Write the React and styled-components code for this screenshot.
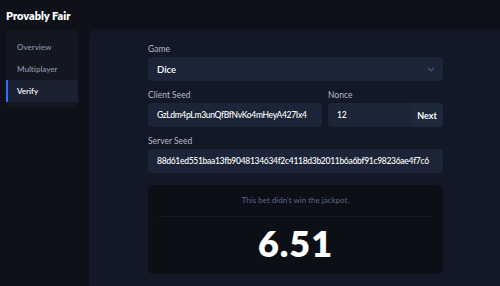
import React from 'react';
import styled, { createGlobalStyle } from 'styled-components';

const GlobalStyle = createGlobalStyle`
  html, body {
    margin: 0;
    padding: 0;
    background: #0e111a;
    font-family: Lato, "Open Sans", sans-serif;
    overflow: hidden;
  }
`;

const menu = ['Overview', 'Multiplayer', 'Verify'];

export default function App() {
  return (
    <Page>
      <GlobalStyle />
      <Title>Provably Fair</Title>
      <Body>
        <Sidebar>
          {menu.map((item) => (
            <MenuItem key={item} active={item === 'Verify'}>
              {item}
            </MenuItem>
          ))}
        </Sidebar>
        <Panel>
          <Form>
            <Field>
              <Label>Game</Label>
              <Select>
                <span>Dice</span>
                <svg width="8" height="5" viewBox="0 0 8 5">
                  <path d="M1 1l3 3 3-3" fill="none" stroke="#4a5775" strokeWidth="1.2" />
                </svg>
              </Select>
            </Field>
            <Row>
              <Field grow>
                <Label>Client Seed</Label>
                <Input>GzLdm4pLm3unQfBfNvKo4mHeyA427Ix4</Input>
              </Field>
              <Field width="115px">
                <Label>Nonce</Label>
                <Input>
                  <span>12</span>
                  <NextButton>Next</NextButton>
                </Input>
              </Field>
            </Row>
            <Field>
              <Label>Server Seed</Label>
              <Input>88d61ed551baa13fb9048134634f2c4118d3b2011b6a6bf91c98236ae4f7c6</Input>
            </Field>
            <Result>
              <Message>This bet didn't win the jackpot.</Message>
              <Divider />
              <Number>6.51</Number>
            </Result>
          </Form>
        </Panel>
      </Body>
    </Page>
  );
}

const Page = styled.div`
  width: 500px;
  height: 286px;
  padding: 0 0 0 6px;
  box-sizing: border-box;
  display: flex;
  flex-direction: column;
`;

const Title = styled.div`
  height: 30px;
  line-height: 31px;
  color: #fff;
  font-size: 11px;
  font-weight: 800;
`;

const Body = styled.div`
  flex: 1;
  display: flex;
  gap: 11px;
  align-items: flex-start;
`;

const Sidebar = styled.div`
  width: 72px;
  padding: 6px 0 5px;
  background: #121722;
  border-radius: 5px;
  display: flex;
  flex-direction: column;
`;

const MenuItem = styled.div`
  height: 22px;
  line-height: 22px;
  padding-left: 11px;
  font-size: 8px;
  font-weight: 600;
  color: ${(p) => (p.active ? '#ffffff' : '#8891a5')};
  background: ${(p) => (p.active ? '#1a2130' : 'transparent')};
  box-shadow: ${(p) => (p.active ? 'inset 2px 0 0 #2f6bff' : 'none')};
`;

const Panel = styled.div`
  flex: 1;
  align-self: stretch;
  background: #121825;
  border-top-left-radius: 6px;
  display: flex;
  justify-content: center;
  padding: 14px 0 0 2px;
`;

const Form = styled.div`
  width: 295px;
  display: flex;
  flex-direction: column;
  gap: 9px;
`;

const Row = styled.div`
  display: flex;
  gap: 6px;
`;

const Field = styled.div`
  display: flex;
  flex-direction: column;
  gap: 2px;
  flex: ${(p) => (p.grow ? 1 : 'none')};
  width: ${(p) => p.width || 'auto'};
  min-width: 0;
`;

const Label = styled.div`
  font-size: 8.5px;
  line-height: 11px;
  color: #b4bccb;
`;

const Input = styled.div`
  height: 24px;
  background: #1c2538;
  border-radius: 4px;
  display: flex;
  align-items: center;
  padding-left: 9px;
  color: #fff;
  font-size: 8.5px;
  letter-spacing: -0.3px;
  font-weight: 500;
  white-space: nowrap;
  overflow: hidden;
  span { flex: 1; }
`;

const Select = styled(Input)`
  justify-content: space-between;
  padding-right: 8px;
  font-size: 9.5px;
  letter-spacing: 0;
  font-weight: 600;
`;

const NextButton = styled.div`
  height: 100%;
  width: 32px;
  display: flex;
  align-items: center;
  justify-content: center;
  background: #1e283b;
  border-left: 1px solid #19212f;
  font-weight: 700;
  font-size: 9px;
  letter-spacing: 0;
`;

const Result = styled.div`
  margin-top: 3px;
  height: 89px;
  background: #0c0f16;
  border-radius: 5px;
  padding: 0 11px;
  display: flex;
  flex-direction: column;
  align-items: center;
`;

const Message = styled.div`
  height: 31px;
  line-height: 31px;
  font-size: 8px;
  color: #5b6785;
`;

const Divider = styled.div`
  align-self: stretch;
  height: 1px;
  background: #141924;
`;

const Number = styled.div`
  flex: 1;
  display: flex;
  align-items: center;
  padding-bottom: 5px;
  color: #fff;
  font-size: 36px;
  letter-spacing: 1px;
  font-weight: 800;
`;
